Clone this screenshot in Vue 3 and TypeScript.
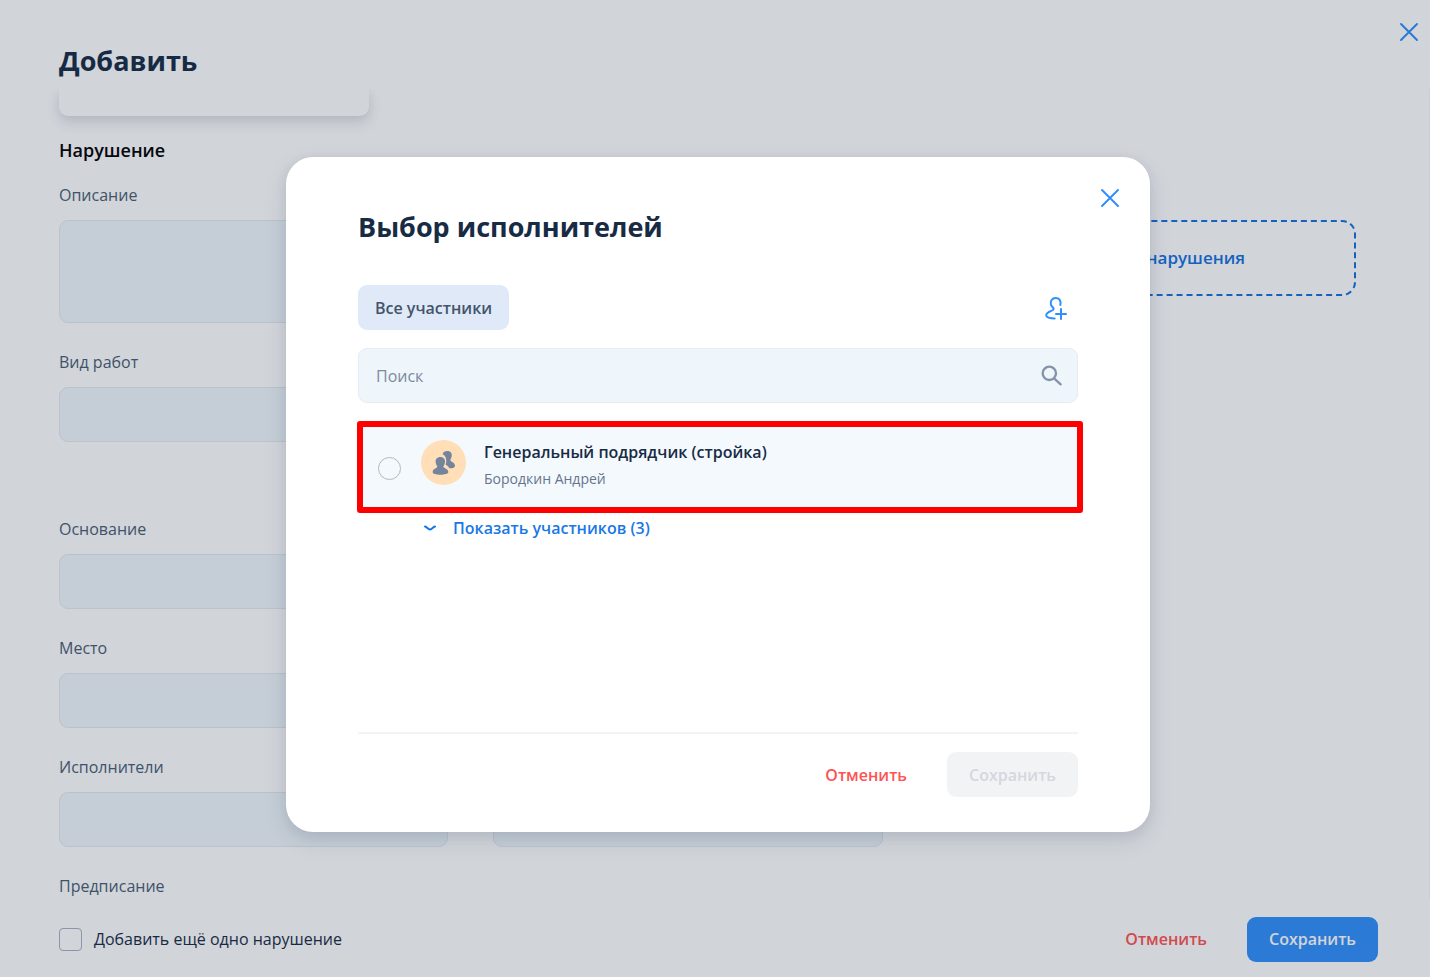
<script setup lang="ts">
import { ref } from 'vue'

interface Field {
  id: string
  label: string
}

const fields: Field[] = [
  { id: 'basis', label: 'Основание' },
  { id: 'place', label: 'Место' },
]

const description = ref('')
const workType = ref('')
const values = ref<Record<string, string>>({ basis: '', place: '' })
const performer = ref('')
const performerExtra = ref('')
const addAnother = ref(false)
const query = ref('')
const selected = ref('')
</script>

<template>
  <div class="page">
    <header class="page-head">
      <h1>Добавить</h1>
      <button class="icon-btn" type="button" aria-label="Закрыть">
        <svg width="20" height="20" viewBox="0 0 20 20"><path class="cross" d="M2 2 18 18M18 2 2 18" /></svg>
      </button>
    </header>

    <main class="scroll">
      <div class="card"></div>
      <h2>Нарушение</h2>
      <form class="form">
        <div class="field">
          <label for="description">Описание</label>
          <textarea id="description" v-model="description"></textarea>
        </div>
        <button class="upload" type="button">нарушения</button>
        <div class="field work">
          <label for="work">Вид работ</label>
          <input id="work" v-model="workType" type="text" />
        </div>
        <div v-for="f in fields" :key="f.id" class="field first">
          <label :for="f.id">{{ f.label }}</label>
          <input :id="f.id" v-model="values[f.id]" type="text" />
        </div>
        <div class="field first">
          <label for="performer">Исполнители</label>
          <input id="performer" v-model="performer" type="text" />
        </div>
        <div class="field extra">
          <input v-model="performerExtra" type="text" aria-label="Исполнители" />
        </div>
        <div class="field first">
          <span class="caption">Предписание</span>
        </div>
      </form>
    </main>

    <footer class="page-foot">
      <label class="check">
        <input v-model="addAnother" type="checkbox" />
        <span>Добавить ещё одно нарушение</span>
      </label>
      <div class="actions">
        <button class="cancel" type="button">Отменить</button>
        <button class="save" type="button">Сохранить</button>
      </div>
    </footer>

    <div class="overlay">
      <section class="modal" role="dialog" aria-labelledby="modal-title">
        <div class="modal-head">
          <h1 id="modal-title">Выбор исполнителей</h1>
          <button class="icon-btn" type="button" aria-label="Закрыть">
            <svg width="20" height="20" viewBox="0 0 20 20"><path class="cross" d="M2 2 18 18M18 2 2 18" /></svg>
          </button>
        </div>

        <div class="toolbar">
          <button class="tab" type="button">Все участники</button>
          <button class="icon-btn" type="button" aria-label="Добавить участника">
            <svg width="24" height="24" viewBox="42 48 72 72">
              <path
                class="user-line"
                d="M91 75C94 62 88 54 77 54C66 54 60 63 63 74C65 81 71 83 71 87C71 92 62 92 55 97C49 101 47 105 50 109C54 114 64 115 74 115.500"
              />
              <path class="user-line" d="M93 87V117M78 102H108" />
            </svg>
          </button>
        </div>

        <div class="search">
          <input v-model="query" type="text" placeholder="Поиск" aria-label="Поиск" />
          <svg width="21" height="21" viewBox="62 588 63 63">
            <circle cx="87" cy="613" r="20" />
            <path d="M102 629 121 646" />
          </svg>
        </div>

        <label class="person">
          <input v-model="selected" type="radio" name="performer" value="general" />
          <span class="avatar">
            <svg width="24" height="26" viewBox="66 60 72 78">
              <path
                d="M98 73C98 67 104 63 112 63C122 63 127 70 125 79C124 85 121 88 121 91C122 95 134 97 135 107C135 113 129 115 118 115C116 110 113 107 107 104C111 94 109 78 98 73Z"
              />
              <path
                d="M91 81C101 81 106 88 105 97C104 105 100 108 100 110C101 114 115 116 115 126C115 132 104 134 91 134C78 134 68 132 68 126C68 116 81 114 82 110C82 108 78 105 77 97C76 88 81 81 91 81Z"
              />
            </svg>
          </span>
          <span class="who">
            <span class="name">Генеральный подрядчик (стройка)</span>
            <span class="sub">Бородкин Андрей</span>
          </span>
        </label>

        <button class="toggle" type="button">
          <svg width="12" height="6" viewBox="0 0 12 6"><path d="M1 1.500C3 2 4.500 4.500 6 4.500S9 2 11 1.500" /></svg>
          <span>Показать участников (3)</span>
        </button>

        <div class="modal-foot">
          <button class="cancel" type="button">Отменить</button>
          <button class="save" type="button" disabled>Сохранить</button>
        </div>
      </section>
    </div>
  </div>
</template>

<style>
body {
  margin: 0;
}
</style>

<style scoped>
.page,
.page * {
  box-sizing: border-box;
}
.page {
  position: relative;
  display: flex;
  flex-direction: column;
  height: 100vh;
  overflow: hidden;
  background: #fff;
  color: #172b45;
  font-family: 'Open Sans', 'Noto Sans', sans-serif;
  font-size: 16px;
  line-height: 24px;
}
button,
input,
textarea {
  font: inherit;
  margin: 0;
}
button {
  padding: 0;
  border: 0;
  background: none;
  cursor: pointer;
}
h1,
h2 {
  margin: 0;
}
h1 {
  font-size: 27px;
  line-height: 36px;
  font-weight: 700;
}
h2 {
  margin-top: 22px;
  font-size: 18px;
  line-height: 24px;
  font-weight: 600;
  color: #000;
}
svg {
  display: block;
}
.cross {
  fill: none;
  stroke: #2f8ffc;
  stroke-width: 2;
  stroke-linecap: round;
}
.page-head {
  display: flex;
  justify-content: space-between;
  align-items: flex-start;
  height: 89px;
  flex: none;
  padding: 22px 11px 0 59px;
}
.page-head h1 {
  margin-top: 21px;
}
.scroll {
  flex: 1;
  min-height: 0;
  overflow: hidden;
  padding: 0 73px 0 59px;
  border-right: 1px solid #f4f5f7;
}
.card {
  width: 310px;
  height: 27px;
  border-radius: 0 0 9px 9px;
  box-shadow: 0 7px 14px rgba(24, 39, 75, 0.12), 0 2px 10px rgba(24, 39, 75, 0.06);
}
.form {
  display: grid;
  grid-template-columns: 10fr 10fr 11fr;
  column-gap: 45px;
  row-gap: 27px;
  margin-top: 21px;
}
.field {
  display: flex;
  flex-direction: column;
  gap: 13px;
}
.field label,
.caption {
  color: #4a5d74;
}
.field input,
.field textarea {
  width: 100%;
  height: 55px;
  padding: 0 17px;
  border: 1px solid #e3e9ef;
  border-radius: 9px;
  background: #f1f8fc;
  outline: none;
}
.field textarea {
  display: block;
  height: 103px;
  resize: none;
}
.first {
  grid-column: 1;
}
.work {
  grid-column: 1;
  margin-bottom: 48px;
}
.extra {
  grid-column: 2;
  justify-content: flex-end;
}
.upload {
  grid-column: 3;
  height: 76px;
  margin-top: 37px;
  padding-right: 109px;
  border: 2px dashed #1371e0;
  border-radius: 14px;
  color: #1371e0;
  font-size: 17px;
  font-weight: 600;
  text-align: right;
}
.page-foot {
  display: flex;
  justify-content: space-between;
  align-items: center;
  flex: none;
  height: 78px;
  padding: 2px 52px 0 59px;
}
.check {
  display: flex;
  align-items: center;
  gap: 12px;
}
.check input {
  appearance: none;
  width: 23px;
  height: 23px;
  border: 1px solid #a9b2c0;
  border-radius: 4px;
}
.actions,
.modal-foot {
  display: flex;
  align-items: center;
  justify-content: flex-end;
  gap: 40px;
}
.cancel {
  color: #ff5252;
  font-weight: 600;
}
.save {
  height: 45px;
  padding: 0 22px;
  border-radius: 9px;
  background: #2f8ffc;
  color: #fff;
  font-weight: 600;
}
.save:disabled {
  background: #f2f3f5;
  color: #d4d7dd;
}
.overlay {
  position: absolute;
  inset: 0;
  display: flex;
  align-items: center;
  justify-content: center;
  padding: 12px 0 0 6px;
  background: rgba(24, 40, 65, 0.2);
}
.modal {
  display: flex;
  flex-direction: column;
  width: 864px;
  height: 675px;
  padding: 0 72px 35px;
  border-radius: 27px;
  background: #fff;
  box-shadow: 0 8px 24px rgba(24, 39, 75, 0.1), 0 4px 12px rgba(24, 39, 75, 0.08);
}
.modal-head {
  display: flex;
  justify-content: space-between;
  align-items: flex-start;
  margin-right: -42px;
  padding-top: 31px;
}
.modal-head h1 {
  margin-top: 21px;
}
.toolbar {
  display: flex;
  justify-content: space-between;
  align-items: center;
  margin-top: 40px;
  padding-right: 10px;
}
.tab {
  height: 45px;
  padding: 0 17px;
  border-radius: 9px;
  background: #dfe9f8;
  color: #44546a;
  font-weight: 600;
}
.user-line {
  fill: none;
  stroke: #2f8ffc;
  stroke-width: 6;
  stroke-linecap: round;
  stroke-linejoin: round;
}
.search {
  display: flex;
  align-items: center;
  height: 55px;
  margin-top: 18px;
  padding: 0 15px 0 17px;
  border: 1px solid #e6ecf3;
  border-radius: 9px;
  background: #eef5fb;
}
.search input {
  flex: 1;
  min-width: 0;
  padding: 0;
  border: 0;
  background: none;
  outline: none;
}
.search input::placeholder {
  color: #7d8a9e;
  opacity: 1;
}
.search svg {
  fill: none;
  stroke: #8494a8;
  stroke-width: 7;
  stroke-linecap: round;
}
.person {
  display: flex;
  align-items: flex-start;
  height: 92px;
  margin: 18px -5px 0 -1px;
  padding: 13px 15px 0;
  border: 6px solid #f00;
  border-radius: 3px;
  background: #f4f9fd;
}
.person input {
  appearance: none;
  flex: none;
  width: 23px;
  height: 23px;
  margin: 17px 20px 0 0;
  border: 1px solid #b4b8be;
  border-radius: 50%;
  background: transparent;
}
.avatar {
  display: flex;
  align-items: center;
  justify-content: center;
  flex: none;
  width: 45px;
  height: 45px;
  margin-right: 18px;
  border-radius: 50%;
  background: #ffdeb8;
}
.avatar svg {
  fill: #74849c;
}
.who {
  display: flex;
  flex-direction: column;
  gap: 5px;
}
.name {
  font-weight: 600;
}
.sub {
  color: #66758c;
  font-size: 14px;
  line-height: 20px;
}
.toggle {
  display: flex;
  align-items: center;
  align-self: flex-start;
  gap: 17px;
  margin: 3px 0 0 66px;
  color: #1a78e6;
  font-weight: 600;
}
.toggle svg {
  fill: none;
  stroke: #1a78e6;
  stroke-width: 2;
  stroke-linecap: round;
}
.modal-foot {
  margin-top: auto;
  padding-top: 18px;
  border-top: 2px solid #f2f3f5;
}
</style>
